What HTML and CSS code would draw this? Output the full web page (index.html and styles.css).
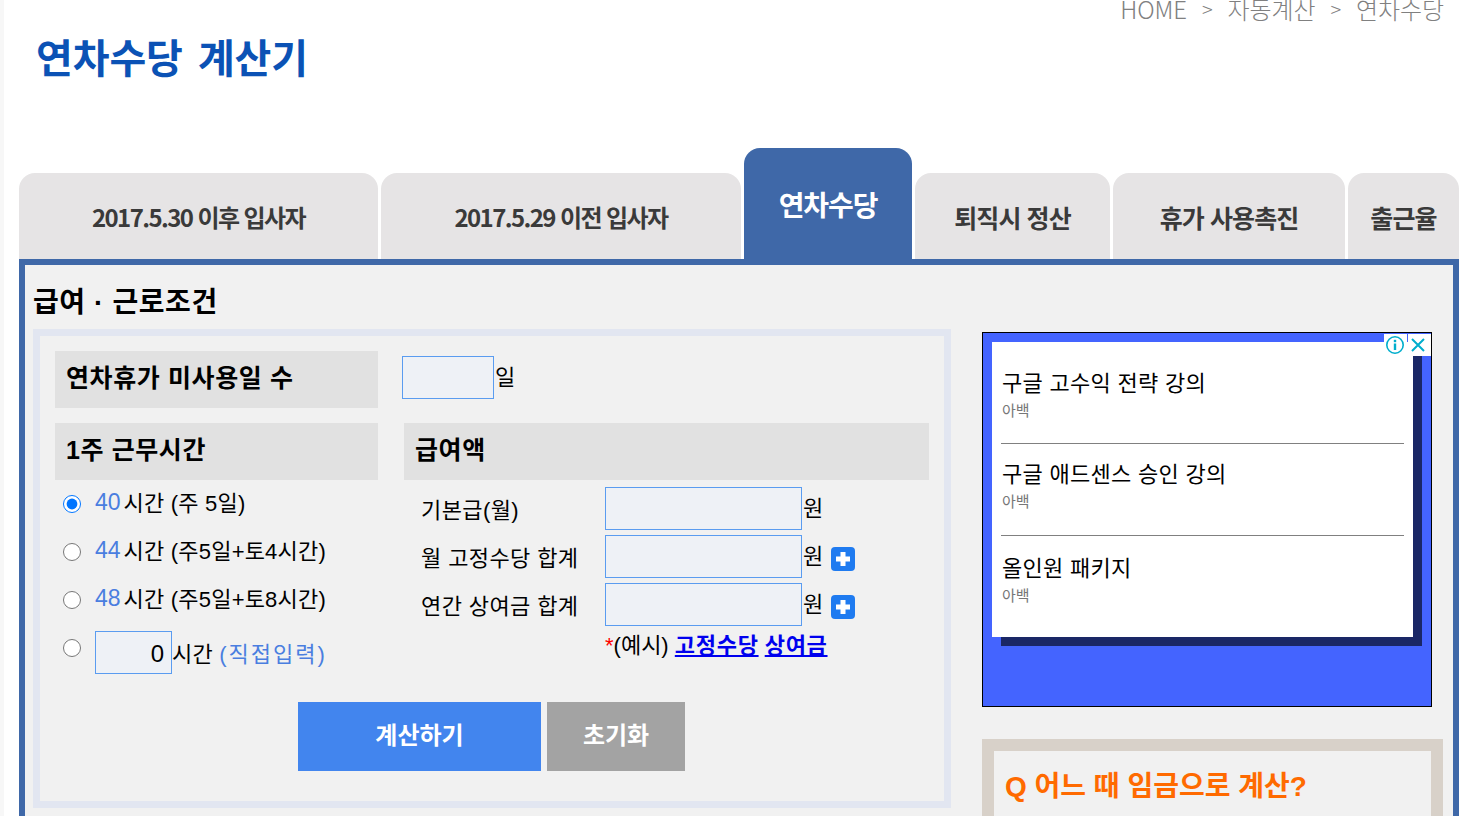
FILE: index.html
```html
<!DOCTYPE html>
<html lang="ko">
<head>
<meta charset="utf-8">
<title>연차수당 계산기</title>
<link rel="stylesheet" href="styles.css">
</head>
<body>
<div class="page">
  <header class="top">
    <nav class="crumbs"><span>HOME</span><span class="sep">&gt;</span><span>자동계산</span><span class="sep">&gt;</span><span>연차수당</span></nav>
    <h1 class="title">연차수당 계산기</h1>
  </header>
  <ul class="tabs">
    <li class="tab t1">2017.5.30 이후 입사자</li>
    <li class="tab t2">2017.5.29 이전 입사자</li>
    <li class="tab t3 active">연차수당</li>
    <li class="tab t4">퇴직시 정산</li>
    <li class="tab t5">휴가 사용촉진</li>
    <li class="tab t6">출근율</li>
  </ul>
  <main class="panel">
    <section class="left">
      <h2 class="section-title">급여 · 근로조건</h2>
      <form class="form-box">
        <div class="row-top">
          <div class="hdr hdr-a">연차휴가 미사용일 수</div>
          <div class="days"><input class="field field-days" type="text"><span class="unit">일</span></div>
        </div>
        <div class="cols">
          <div class="col-hours">
            <div class="hdr hdr-a">1주 근무시간</div>
            <label class="radio-row"><input class="radio" type="radio" name="h" checked><span class="num">40</span><span class="rt">시간 (주 5일)</span></label>
            <label class="radio-row"><input class="radio" type="radio" name="h"><span class="num">44</span><span class="rt">시간 (주5일+토4시간)</span></label>
            <label class="radio-row"><input class="radio" type="radio" name="h"><span class="num">48</span><span class="rt">시간 (주5일+토8시간)</span></label>
            <label class="radio-row custom"><input class="radio" type="radio" name="h"><input class="field field-hours" type="text" value="0"><span class="rt">시간 <span class="direct">(직접입력)</span></span></label>
          </div>
          <div class="col-pay">
            <div class="hdr hdr-b">급여액</div>
            <div class="pay-rows">
              <div class="pay-row"><span class="pay-label">기본급(월)</span><input class="field field-pay" type="text"><span class="unit">원</span></div>
              <div class="pay-row"><span class="pay-label">월 고정수당 합계</span><input class="field field-pay" type="text"><span class="unit">원</span><svg class="plus" viewBox="0 0 24 24" aria-hidden="true"><rect width="24" height="24" rx="4" fill="#1f7bf0"/><path d="M12 5v14M5 12h14" stroke="#fff" stroke-width="5"/></svg></div>
              <div class="pay-row"><span class="pay-label">연간 상여금 합계</span><input class="field field-pay" type="text"><span class="unit">원</span><svg class="plus" viewBox="0 0 24 24" aria-hidden="true"><rect width="24" height="24" rx="4" fill="#1f7bf0"/><path d="M12 5v14M5 12h14" stroke="#fff" stroke-width="5"/></svg></div>
              <div class="example"><span class="star">*</span>(예시) <a href="#">고정수당</a> <a href="#">상여금</a></div>
            </div>
          </div>
        </div>
        <div class="buttons">
          <button class="btn btn-calc" type="button">계산하기</button>
          <button class="btn btn-reset" type="reset">초기화</button>
        </div>
      </form>
    </section>
    <aside class="right">
      <div class="ad">
        <div class="ad-card">
          <div class="ad-item"><div class="ad-name">구글 고수익 전략 강의</div><div class="ad-sub">아백</div></div>
          <div class="ad-item"><div class="ad-name">구글 애드센스 승인 강의</div><div class="ad-sub">아백</div></div>
          <div class="ad-item"><div class="ad-name">올인원 패키지</div><div class="ad-sub">아백</div></div>
        </div>
        <div class="ad-badge">
          <svg class="ad-i" viewBox="0 0 20 20" aria-hidden="true"><circle cx="10" cy="10" r="8.2" fill="none" stroke="#00aecd" stroke-width="1.6"/><rect x="8.8" y="8.5" width="2.4" height="6.5" fill="#00aecd"/><rect x="8.8" y="4.8" width="2.4" height="2.4" fill="#00aecd"/></svg>
          <svg class="ad-x" viewBox="0 0 16 16" aria-hidden="true"><path d="M2 2l12 12M14 2L2 14" stroke="#00aecd" stroke-width="2" fill="none"/></svg>
          <span class="ad-divider"></span>
        </div>
      </div>
      <div class="faq"><h3 class="faq-q">Q 어느 때 임금으로 계산?</h3></div>
    </aside>
  </main>
</div>
</body>
</html>
```

FILE: styles.css
```css
* { box-sizing: border-box; }
html, body { margin: 0; padding: 0; height: 816px; overflow: hidden; background: #fff; }
body {
  font-family: "Liberation Sans", "Noto Sans CJK KR", sans-serif;
  color: #000;
  border-left: 4px solid #f7f7f7;
}
.page { width: 1469px; padding-left: 15px; }

.top { display: flow-root; height: 148px; }
.crumbs {
  display: flex;
  justify-content: flex-end;
  gap: 14px;
  height: 24px;
  margin-top: -3px;
  padding-right: 15px;
  font: 300 24px/24px "Noto Sans CJK KR", sans-serif;
  letter-spacing: -0.1px;
  color: #808080;
  width: 1440px;
}
.sep { font-size: 20px; padding: 0 1px; }
.title {
  margin: 11px 0 0 17px;
  font: 700 40px/48px "Noto Sans CJK KR", sans-serif;
  letter-spacing: -0.1px;
  word-spacing: 4px;
  color: #0b52b5;
}

.tabs {
  display: flex;
  align-items: flex-end;
  gap: 3px;
  width: 1440px;
  height: 111px;
  margin: 0;
  padding: 0;
  list-style: none;
}
.tab {
  height: 86px;
  border-radius: 16px 16px 0 0;
  background: #e6e4e5;
  color: #3a3a3a;
  font: 700 25px/88px "Noto Sans CJK KR", sans-serif;
  letter-spacing: -0.9px;
  text-align: center;
  white-space: nowrap;
}
.t1 { width: 359px; font-size: 24px; letter-spacing: -1.6px; }
.t2 { width: 360px; font-size: 24px; letter-spacing: -1.6px; }
.t3 { width: 168px; }
.t4 { width: 195px; }
.t5 { width: 232px; }
.t6 { width: 111px; }
.tab.active {
  height: 111px;
  background: #3f68a8;
  color: #fff;
  font-size: 28px;
  line-height: 112px;
  letter-spacing: -1.1px;
}

.panel {
  display: flex;
  gap: 31px;
  width: 1440px;
  height: 600px;
  padding: 0 0 0 8px;
  border: 6px solid #3f68a8;
  background: #f1f1f1;
}
.left { width: 918px; }
.section-title {
  margin: 0;
  height: 64px;
  font-size: 28px;
  line-height: 75px;
  font-weight: 700;
  letter-spacing: 0.6px;
}
.form-box {
  height: 479px;
  padding: 15px 15px 0;
  border: 7px solid #e2e6f1;
}
.hdr {
  height: 57px;
  background: #e1e1e1;
  padding-left: 11px;
  font-size: 25px;
  font-weight: 700;
  line-height: 54px;
  letter-spacing: 0.6px;
}
.hdr-a { width: 323px; }
.hdr-b { width: 525px; }
.row-top { display: flex; gap: 24px; height: 72px; }
.days { display: flex; align-items: center; height: 53px; }
.field {
  height: 43px;
  border: 1px solid #5a9cf0;
  border-radius: 0;
  background: #eef1f6;
  padding: 0 8px;
  font: 400 24px "Liberation Sans", sans-serif;
  text-align: right;
  color: #000;
}
.field-days { width: 92px; }
.field-pay { width: 197px; flex: none; }
.field-hours { width: 77px; flex: none; padding: 3px 7px 0 8px; }
.unit { font-size: 22px; margin-left: 1px; line-height: 43px; }

.cols { display: flex; gap: 26px; height: 279px; }
.col-hours { width: 323px; }
.radio-row {
  display: flex;
  align-items: center;
  height: 48px;
  padding-left: 8px;
  font-size: 22px;
}
.radio { width: 18px; height: 18px; margin: 0 14px 0 0; flex: none; }
.num { color: #4a7ee0; margin-right: 3px; margin-bottom: 4px; font-size: 23px; }
.rt { letter-spacing: 0.2px; white-space: nowrap; margin-bottom: 6px; }
.custom { height: 56px; }
.custom .rt { margin: 0; }
.custom .radio { margin-bottom: 8px; }
.direct { color: #4a7ee0; letter-spacing: 2px; }

.pay-rows { padding: 7px 0 0 17px; }
.pay-row { display: flex; align-items: center; height: 43px; margin-bottom: 5px; }
.pay-label { width: 184px; flex: none; font-size: 22px; letter-spacing: 0.4px; margin-bottom: 2px; }
.plus { width: 24px; height: 24px; margin-left: 8px; margin-top: 5px; }
.example { padding-left: 184px; font-size: 22px; line-height: 30px; margin-top: 1px; }
.star { color: #f00; }
.example a { color: #00e; font-weight: 700; text-decoration: underline; letter-spacing: 0.7px; }

.buttons { display: flex; gap: 6px; margin-left: 243px; }
.btn {
  height: 69px;
  padding: 0 0 6px;
  border: 0;
  color: #fff;
  font: 700 24px "Noto Sans CJK KR", sans-serif;
  letter-spacing: 0;
}
.btn-calc { width: 243px; background: #4285ee; }
.btn-reset { width: 138px; background: #a3a3a3; }

.right { width: 461px; padding-top: 67px; }
.ad {
  position: relative;
  width: 450px;
  height: 375px;
  border: 1px solid #000;
  background: #4464ff;
  padding: 9px;
}
.ad-card {
  width: 421px;
  height: 295px;
  padding: 0 9px;
  background: #fff;
  box-shadow: 9px 9px 0 #1a2766;
}
.ad-item { height: 92px; padding-top: 15px; border-bottom: 1px solid #808080; }
.ad-item:first-child { height: 102px; padding-top: 26px; }
.ad-item:last-child { padding-top: 17px; border-bottom: 0; }
.ad-name { font-size: 22px; line-height: 32px; letter-spacing: 0.3px; white-space: nowrap; padding-left: 1px; }
.ad-sub { font-size: 15px; line-height: 20px; color: #777; margin-top: 1px; padding-left: 1px; }
.ad-badge {
  position: absolute;
  top: 0;
  right: 0;
  display: flex;
  align-items: center;
  width: 47px;
  height: 23px;
  border-top: 1px solid #4464ff;
  background: #fff;
}
.ad-i { width: 20px; height: 20px; margin-left: 1px; }
.ad-x { width: 16px; height: 16px; margin-left: 5px; }
.ad-divider {
  position: absolute;
  top: 0;
  left: 23px;
  width: 1px;
  height: 8px;
  background: #4464ff;
}

.faq {
  width: 461px;
  height: 200px;
  margin-top: 32px;
  border: 12px solid #d8d1c9;
  background: #f1f1f1;
}
.faq-q {
  margin: 0;
  padding-left: 11px;
  color: #ff6a00;
  font-size: 28px;
  font-weight: 700;
  line-height: 71px;
}
```
